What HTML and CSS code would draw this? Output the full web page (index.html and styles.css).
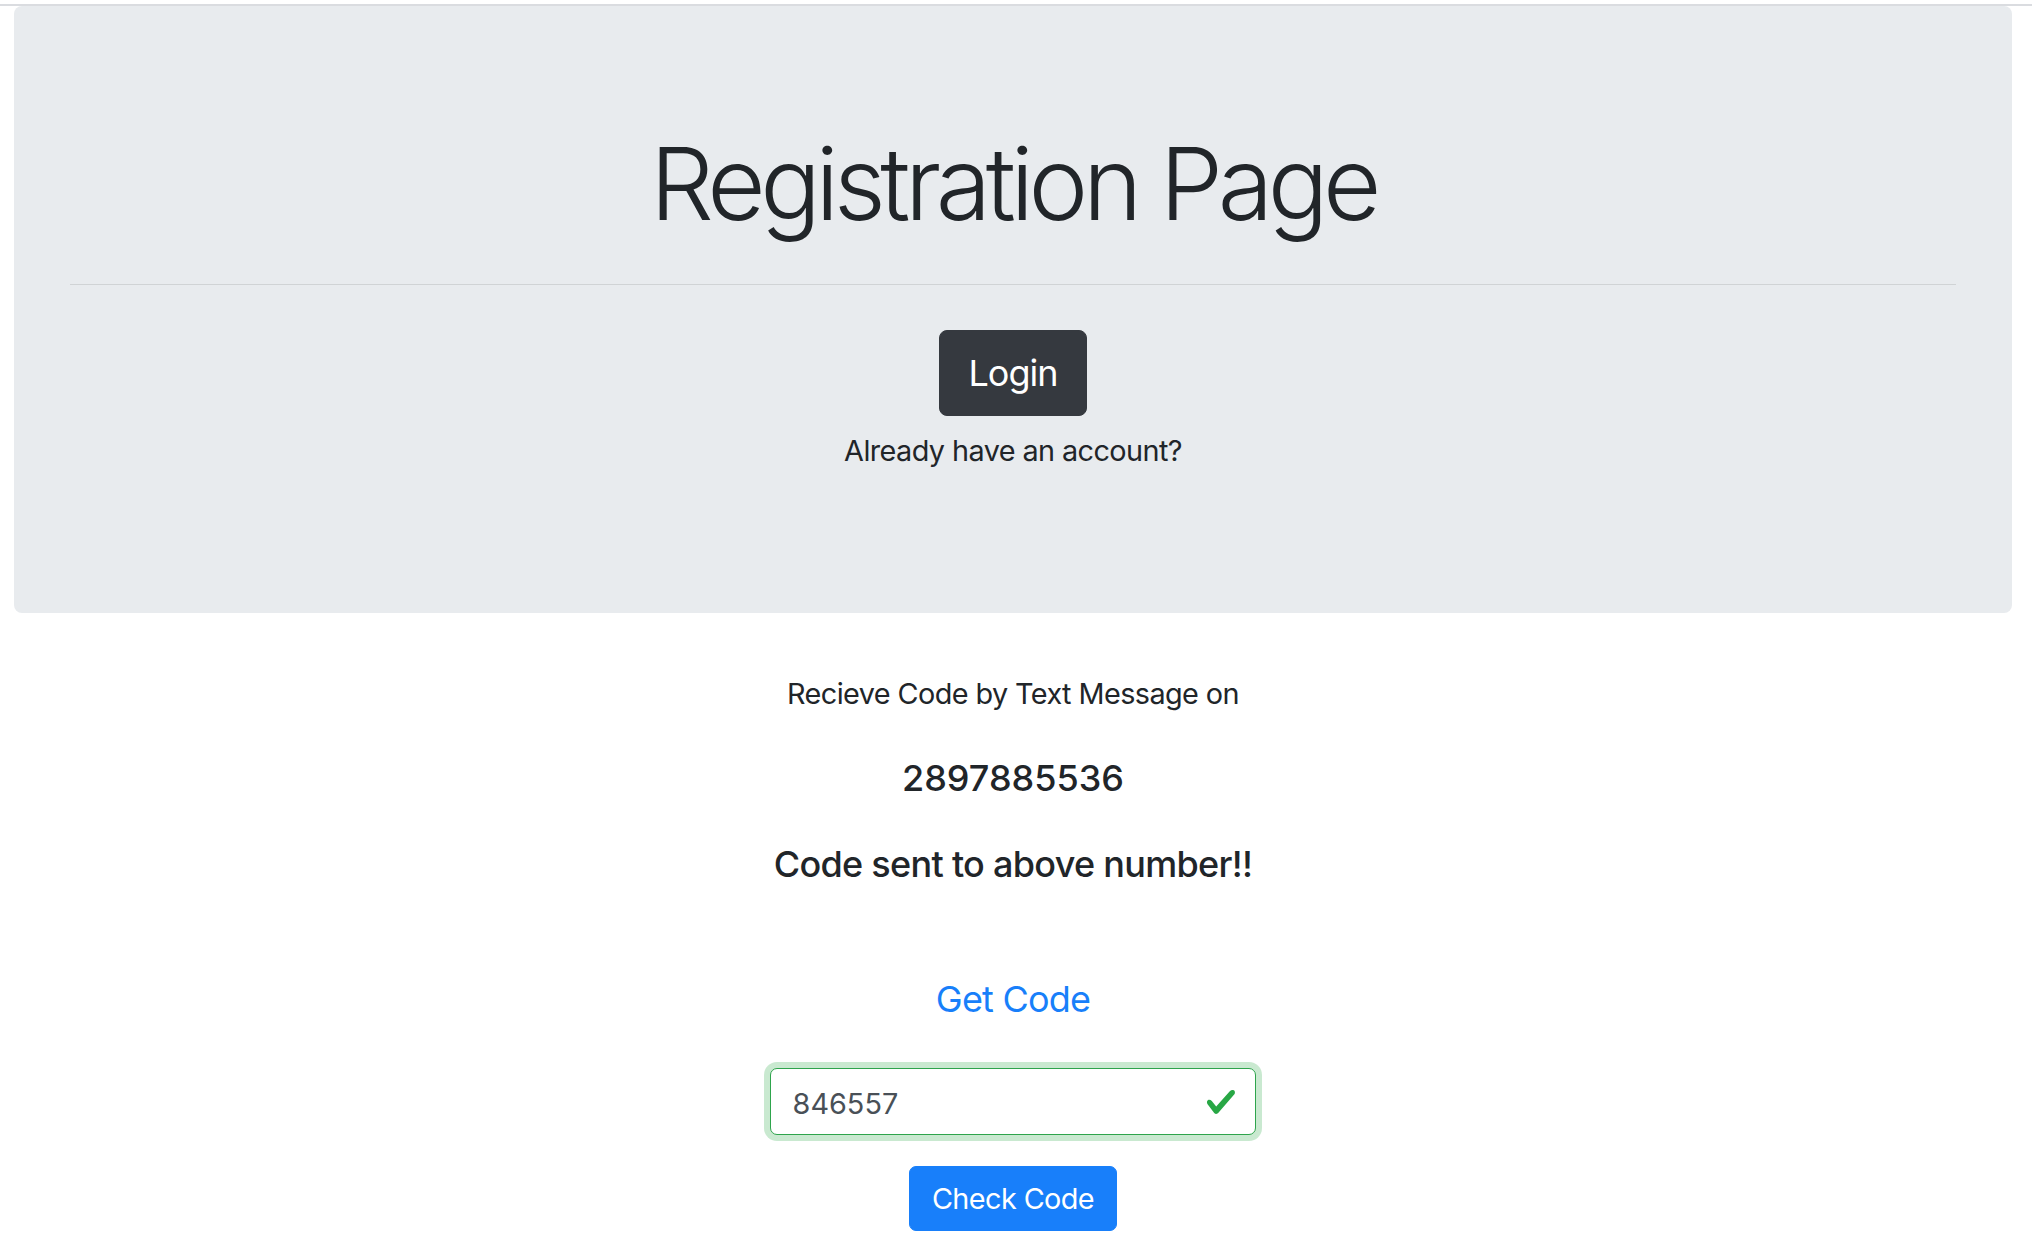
FILE: index.html
```html
<!DOCTYPE html>
<html lang="en">
<head>
<meta charset="utf-8">
<title>Registration Page</title>
<link rel="stylesheet" href="styles.css">
</head>
<body>
<div class="topline"></div>
<div class="page">
  <div class="jumbotron">
    <h1 class="display">Registration Page</h1>
    <hr class="divider">
    <div class="login-row"><a class="btn btn-dark" href="#">Login</a></div>
    <p class="lead-text">Already have an account?</p>
  </div>
  <div class="verify">
    <p class="receive">Recieve Code by Text Message on</p>
    <h5 class="phone">2897885536</h5>
    <h5 class="sent">Code sent to above number!!</h5>
    <a class="get-code" href="#">Get Code</a>
    <div class="input-wrap">
      <input class="code-input" type="text" value="846557">
      <svg class="valid-icon" viewBox="0 0 8 8" width="32" height="32"><path fill="#28a745" d="M2.3 6.73L.6 4.53c-.4-1.04.46-1.4 1.1-.8l1.1 1.4 3.4-3.8c.6-.63 1.6-.27 1.2.7l-4 4.6c-.43.5-.8.4-1.1.1z"/></svg>
    </div>
    <div class="check-row"><a class="btn btn-primary" href="#">Check Code</a></div>
  </div>
</div>
</body>
</html>
```

FILE: styles.css
```css
* { box-sizing: border-box; }
html, body { margin: 0; padding: 0; background: #fff; }
body {
  font-family: Inter, "Noto Sans", "Liberation Sans", sans-serif;
  color: #212529;
  font-size: 28.8px;
  line-height: 43.2px;
  letter-spacing: -0.02em;
}
.topline {
  margin-top: 4px;
  height: 2px;
  background: #dadce0;
}
.page {
  margin: 0 20px 0 14px;
}
.jumbotron {
  background: #e8ebee;
  border-radius: 8px;
  padding: 117px 56px 141px;
  text-align: center;
}
.display {
  margin: 0;
  font-size: 100.8px;
  font-weight: 300;
  line-height: 121px;
  letter-spacing: -5.4px;
}
.divider {
  margin: 40px 0 0;
  border: 0;
  border-top: 1px solid rgba(0,0,0,0.1);
  height: 0;
}
.login-row {
  margin-top: 45px;
  display: flex;
  justify-content: center;
}
.btn {
  display: inline-block;
  text-decoration: none;
  border: 1px solid transparent;
  text-align: center;
}
.btn-dark {
  background: #35393f;
  border-color: #35393f;
  color: #fff;
  font-size: 36px;
  line-height: 54px;
  padding: 15px 28.8px;
  border-radius: 8px;
  letter-spacing: -1px;
}
.lead-text {
  margin: 13px 0 0;
}
.verify {
  text-align: center;
  padding-top: 59px;
}
.receive { margin: 0; }
.phone, .sent {
  margin: 0;
  font-size: 36px;
  font-weight: 500;
  line-height: 43.2px;
}
.phone { margin-top: 42px; letter-spacing: 0; }
.sent { margin-top: 42px; letter-spacing: -0.7px; }
.get-code {
  display: block;
  width: max-content;
  margin: 86px auto 0;
  color: #187ffa;
  text-decoration: none;
  font-size: 36px;
  line-height: 54px;
  letter-spacing: -0.8px;
}
.input-wrap {
  position: relative;
  width: 486px;
  margin: 42px auto 0;
}
.code-input {
  display: block;
  width: 100%;
  height: 67px;
  font-family: inherit;
  font-size: 28.8px;
  line-height: 43.2px;
  color: #495057;
  padding: 12.5px 64.8px 9.1px 21.6px;
  border: 1.5px solid #2ea44c;
  border-radius: 7px;
  box-shadow: 0 0 0 6px rgba(40,167,69,0.25);
  outline: none;
  background: #fff;
  letter-spacing: 0;
}
.valid-icon {
  position: absolute;
  right: 19px;
  top: 18px;
  width: 32px;
  height: 32px;
}
.check-row {
  margin-top: 31px;
  display: flex;
  justify-content: center;
}
.btn-primary {
  background: #187ffa;
  border-color: #187ffa;
  color: #fff;
  font-size: 28.8px;
  line-height: 43.2px;
  padding: 10px 21.6px;
  border-radius: 7px;
}
```
